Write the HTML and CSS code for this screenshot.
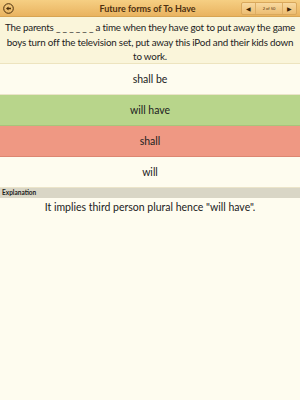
FILE: index.html
```html
<!DOCTYPE html>
<html>

<head>
    <meta charset="UTF-8">
    <title>Future forms of To Have</title>
    <link rel="stylesheet" href="styles.css">
</head>

<body>
    <div class="topbar">
        <div class="back">
            <svg width="11" height="11" viewBox="0 0 11 11">
                <circle cx="5.5" cy="5.5" r="4.8" fill="none" stroke="#4a2e0c" stroke-width="1"/>
                <path d="M3 5.5 L5.5 3.6 L5.5 4.8 L8 4.8 L8 6.2 L5.5 6.2 L5.5 7.4 Z" fill="#4a2e0c"/>
            </svg>
        </div>
        <div class="title">Future forms of To Have</div>
        <div class="pager">
            <span class="arrow">&#9664;</span>
            <span class="count">2 of 50</span>
            <span class="arrow">&#9654;</span>
        </div>
    </div>

    <div class="question">
        The parents _ _ _ _ _ _ a time when they have got to put away the game<br>
        boys turn off the television set, put away this iPod and their kids down<br>
        to work.
    </div>

    <div class="option">shall be</div>
    <div class="option correct">will have</div>
    <div class="option wrong">shall</div>
    <div class="option">will</div>

    <div class="explain-head">Explanation</div>
    <div class="explain">It implies third person plural hence "will have".</div>
</body>

</html>
```
FILE: styles.css
```css
body {
    margin: 0;
    background-color: #fefcef;
    font-family: "Lato", sans-serif;
    color: #222222;
}

.topbar {
    height: 16px;
    background: linear-gradient(#f6cf83, #e9b360);
    border-bottom: 1px solid #d7a452;
    display: flex;
    align-items: center;
}

.back {
    width: 11px;
    height: 11px;
    margin-left: 3px;
    display: flex;
}

.title {
    flex: 1;
    text-align: center;
    font-size: 9px;
    font-weight: bold;
    color: #4e3010;
    padding-left: 40px;
}

.pager {
    display: flex;
    align-items: center;
    height: 11px;
    margin-right: 3px;
    border: 1px solid #d9a85c;
    border-radius: 2px;
    background: linear-gradient(#f8d9a0, #ecbd72);
}

.arrow {
    font-size: 6px;
    color: #3a2408;
    width: 13px;
    text-align: center;
}

.count {
    font-size: 4px;
    color: #4e3010;
    width: 26px;
    text-align: center;
    border-left: 1px solid #dcae66;
    border-right: 1px solid #dcae66;
    line-height: 11px;
}

.question {
    background-color: #faf5da;
    font-size: 9.8px;
    letter-spacing: -0.2px;
    line-height: 14.5px;
    text-align: center;
    white-space: nowrap;
    padding: 3px 0 2px;
    height: 41px;
    border-bottom: 1px solid #ede4bf;
}

.option {
    height: 30px;
    line-height: 30px;
    text-align: center;
    font-size: 10.5px;
    border-bottom: 1px solid #ebe4c9;
}

.correct {
    background-color: #b8d58b;
    border-bottom-color: #a8c47a;
}

.wrong {
    background-color: #ef9883;
    border-bottom-color: #dc8671;
}

.explain-head {
    background-color: #d9d6c6;
    font-size: 6.5px;
    font-weight: bold;
    height: 10px;
    line-height: 10px;
    padding-left: 2px;
    color: #1c1c1c;
}

.explain {
    text-align: center;
    font-size: 10.5px;
    padding-top: 3px;
}
```
